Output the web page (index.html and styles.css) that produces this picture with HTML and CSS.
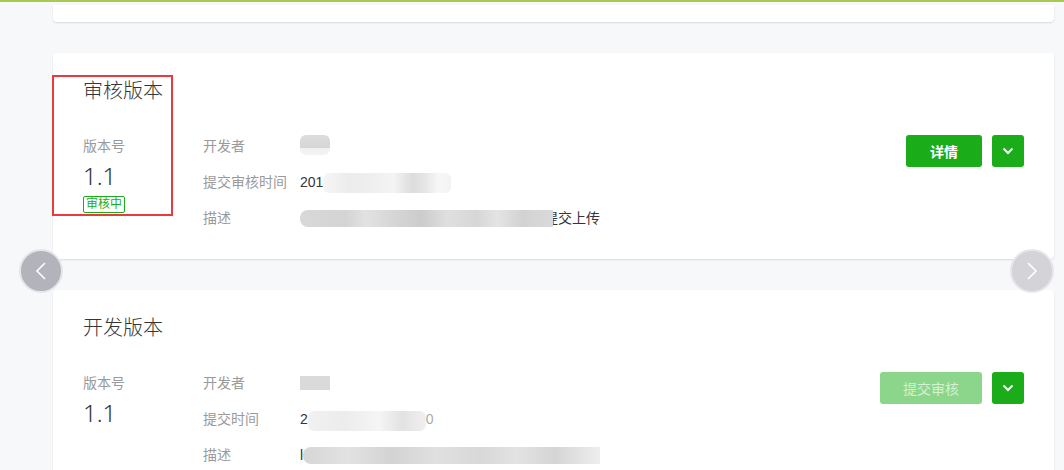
FILE: index.html
```html
<!DOCTYPE html>
<html lang="zh-CN">
<head>
  <meta charset="UTF-8">
  <title>版本管理</title>
  <link rel="stylesheet" href="styles.css">
</head>
<body>
  <div class="topLine"></div>
  <div class="page">
    <div class="card cardTop"></div>

    <div class="card version">
      <div class="mark"></div>
      <h3 class="versionTitle">审核版本</h3>
      <div class="versionBody">
        <div class="versionNo">
          <div class="label">版本号</div>
          <div class="number">1.1</div>
          <span class="badge">审核中</span>
        </div>
        <ul class="fields">
          <li><span class="label fieldName">开发者</span><span class="blur blurName"></span></li>
          <li><span class="label fieldName">提交审核时间</span><span class="value">201</span><span class="blur blurTime"></span></li>
          <li><span class="label fieldName">描述</span><span class="blur blurDesc"></span><span class="value">提交上传</span></li>
        </ul>
        <div class="actions">
          <button class="btn btnMain">详情</button>
          <button class="btn btnMore"><svg width="12" height="8" viewBox="0 0 12 8"><polyline points="1.5,1.5 6,6 10.5,1.5" fill="none" stroke="#fff" stroke-width="2"/></svg></button>
        </div>
      </div>
    </div>

    <div class="card version">
      <h3 class="versionTitle">开发版本</h3>
      <div class="versionBody">
        <div class="versionNo">
          <div class="label">版本号</div>
          <div class="number">1.1</div>
        </div>
        <ul class="fields">
          <li><span class="label fieldName">开发者</span><span class="blur blurName small"></span></li>
          <li><span class="label fieldName">提交时间</span><span class="value">2</span><span class="blur blurTime2"></span><span class="value faint">0</span></li>
          <li><span class="label fieldName">描述</span><span class="value">l</span><span class="blur blurDesc2"></span></li>
        </ul>
        <div class="actions">
          <button class="btn btnMain btnDisabled">提交审核</button>
          <button class="btn btnMore"><svg width="12" height="8" viewBox="0 0 12 8"><polyline points="1.5,1.5 6,6 10.5,1.5" fill="none" stroke="#fff" stroke-width="2"/></svg></button>
        </div>
      </div>
    </div>

    <a class="slideArrow prev"><svg width="12" height="20" viewBox="0 0 12 20"><polyline points="10,2 2,10 10,18" fill="none" stroke="#fff" stroke-width="1.6"/></svg></a>
    <a class="slideArrow next"><svg width="12" height="20" viewBox="0 0 12 20"><polyline points="2,2 10,10 2,18" fill="none" stroke="#fff" stroke-width="1.6"/></svg></a>
  </div>
</body>
</html>
```

FILE: styles.css
```css
body{
  margin: 0;
  background: #f7f8fa;
  font-family: "Liberation Sans", "Noto Sans CJK SC", sans-serif;
  color: #353535;
  overflow: hidden;
}
.topLine{
  height: 2px;
  background: #a9c951;
}
.page{
  position: relative;
  width: 1001px;
  margin-left: 53px;
  height: 468px;
}
.card{
  background: #fff;
  border-radius: 4px;
  box-shadow: 0 1px 2px rgba(0,0,0,0.12);
}
.cardTop{
  height: 17px;
  margin-top: 3px;
  border-radius: 0 0 4px 4px;
}
.version{
  position: relative;
  margin-top: 31px;
  padding: 24px 30px 30px 30px;
  height: 152px;
}
.mark{
  position: absolute;
  left: -1px;
  top: 22px;
  width: 117px;
  height: 137px;
  border: 2px solid #ea3a3c;
}
.versionTitle{
  margin: 0;
  font-size: 20px;
  line-height: 28px;
  font-weight: 300;
  color: #353535;
}
.versionBody{
  display: flex;
  margin-top: 31px;
}
.label{
  font-size: 14px;
  line-height: 20px;
  color: #9a9a9a;
}
.versionNo{
  width: 120px;
}
.number{
  margin-top: 6px;
  font-family: "Noto Sans", "Liberation Sans", sans-serif;
  font-size: 24px;
  line-height: 28px;
  font-weight: 300;
  color: #353535;
}
.badge{
  display: inline-block;
  margin-top: 6px;
  padding: 0 2px;
  border: 1px solid #1aad19;
  border-radius: 2px;
  font-size: 12px;
  line-height: 15px;
  color: #1aad19;
}
.fields{
  list-style: none;
  margin: 0;
  padding: 0;
}
.fields li{
  display: flex;
  align-items: center;
  height: 20px;
  margin-bottom: 16px;
}
.fieldName{
  width: 97px;
}
.value{
  font-size: 14px;
  line-height: 20px;
  color: #353535;
}
.faint{
  color: #aaa;
}
.blur{
  display: inline-block;
  border-radius: 6px;
}
.blurName{
  width: 30px;
  height: 20px;
  margin-top: -2px;
  background: linear-gradient(180deg, #dcdcdc 0, #d6d6d6 65%, #f0f0f0 66%, #f4f4f4 100%);
}
.blurName.small{
  height: 14px;
  margin-top: 0;
  background: #dadada;
  border-radius: 0;
}
.blurTime{
  width: 128px;
  height: 20px;
  margin-top: 2px;
  background: linear-gradient(90deg, #f6f6f6 0, #ececec 20%, #efefef 40%, #f4f4f4 55%, #dcdcdc 70%, #e6e6e6 80%, #f7f7f7 90%, #f3f3f3 100%);
}
.blurTime2{
  width: 118px;
  height: 20px;
  margin-top: 4px;
  background: linear-gradient(90deg, #f1f1f1 0, #ececec 30%, #f5f5f5 60%, #e2e2e2 80%, #f0f0f0 100%);
}
.blurDesc{
  position: relative;
  z-index: 1;
  width: 253px;
  height: 17px;
  margin-right: -9px;
  border-radius: 8px 0 0 8px;
  background: linear-gradient(90deg, #d8d8d8 0, #d4d4d4 18%, #e2e2e2 26%, #d3d3d3 40%, #cccccc 48%, #dfdfdf 58%, #d7d7d7 70%, #e4e4e4 78%, #d2d2d2 88%, #dadada 100%);
}
.blurDesc2{
  width: 297px;
  height: 17px;
  border-radius: 8px 0 0 8px;
  background: linear-gradient(90deg, #d6d6d6 0, #e2e2e2 15%, #d3d3d3 30%, #e0e0e0 45%, #d8d8d8 60%, #e3e3e3 72%, #d5d5d5 85%, #eeeeee 100%);
}
.actions{
  display: flex;
  gap: 10px;
  margin-left: auto;
  margin-top: -1px;
  align-self: flex-start;
}
.btn{
  height: 32px;
  border: 0;
  border-radius: 3px;
  background: #1aad19;
  color: #fff;
  font-family: inherit;
  font-size: 14px;
  font-weight: bold;
  cursor: pointer;
}
.btnMain{
  width: 76px;
}
.btnDisabled{
  width: 102px;
  background: #8cd68b;
  color: #d5f0d4;
  font-weight: normal;
}
.btnMore{
  width: 32px;
  padding: 0;
  display: flex;
  align-items: center;
  justify-content: center;
}
.slideArrow{
  position: absolute;
  top: 244px;
  width: 40px;
  height: 40px;
  border: 2px solid #e6e6ea;
  border-radius: 50%;
  display: flex;
  align-items: center;
  justify-content: center;
}
.prev{
  left: -34px;
  background: #b3b3bb;
}
.next{
  left: 957px;
  background: #d3d3d8;
}
```
